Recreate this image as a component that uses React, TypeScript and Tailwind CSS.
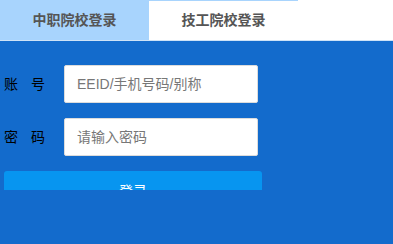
import React from "react";

export default function App() {
  const font = { fontFamily: '"Liberation Sans", "Noto Sans CJK SC", sans-serif' };
  return (
    <div className="w-[393px] h-[244px] bg-[#136bcc] overflow-hidden" style={font}>
      <div className="flex h-[41px] bg-white border-b border-[#cfe3f7]">
        <div className="w-[149px] bg-[#a8d4fd] flex items-center justify-center text-[14px] font-bold text-[#555555]">
          中职院校登录
        </div>
        <div className="w-[149px] border-t border-[#a8d4fd] flex items-center justify-center text-[14px] font-bold text-[#555555]">
          技工院校登录
        </div>
        <div className="flex-1" />
      </div>
      <div className="pl-[4px] pt-[24px] flex flex-col gap-[15px]">
        <div className="flex items-center">
          <div className="w-[41px] flex justify-between text-[14px] text-black">
            <span>账</span>
            <span>号</span>
          </div>
          <input
            className="ml-[19px] w-[194px] h-[38px] bg-white border border-[#dcdcdc] rounded-[2px] pl-[12px] text-[14px] outline-none placeholder:text-[#777777]"
            placeholder="EEID/手机号码/别称"
          />
        </div>
        <div className="flex items-center">
          <div className="w-[41px] flex justify-between text-[14px] text-black">
            <span>密</span>
            <span>码</span>
          </div>
          <input
            type="password"
            className="ml-[19px] w-[194px] h-[38px] bg-white border border-[#dcdcdc] rounded-[2px] pl-[12px] text-[14px] outline-none placeholder:text-[#777777]"
            placeholder="请输入密码"
          />
        </div>
        <div className="w-[258px] h-[19px] overflow-hidden rounded-t-[3px]">
          <div className="w-[258px] h-[40px] bg-[#0795f0] text-white text-[14px] leading-[40px] text-center">
            登录
          </div>
        </div>
      </div>
    </div>
  );
}
